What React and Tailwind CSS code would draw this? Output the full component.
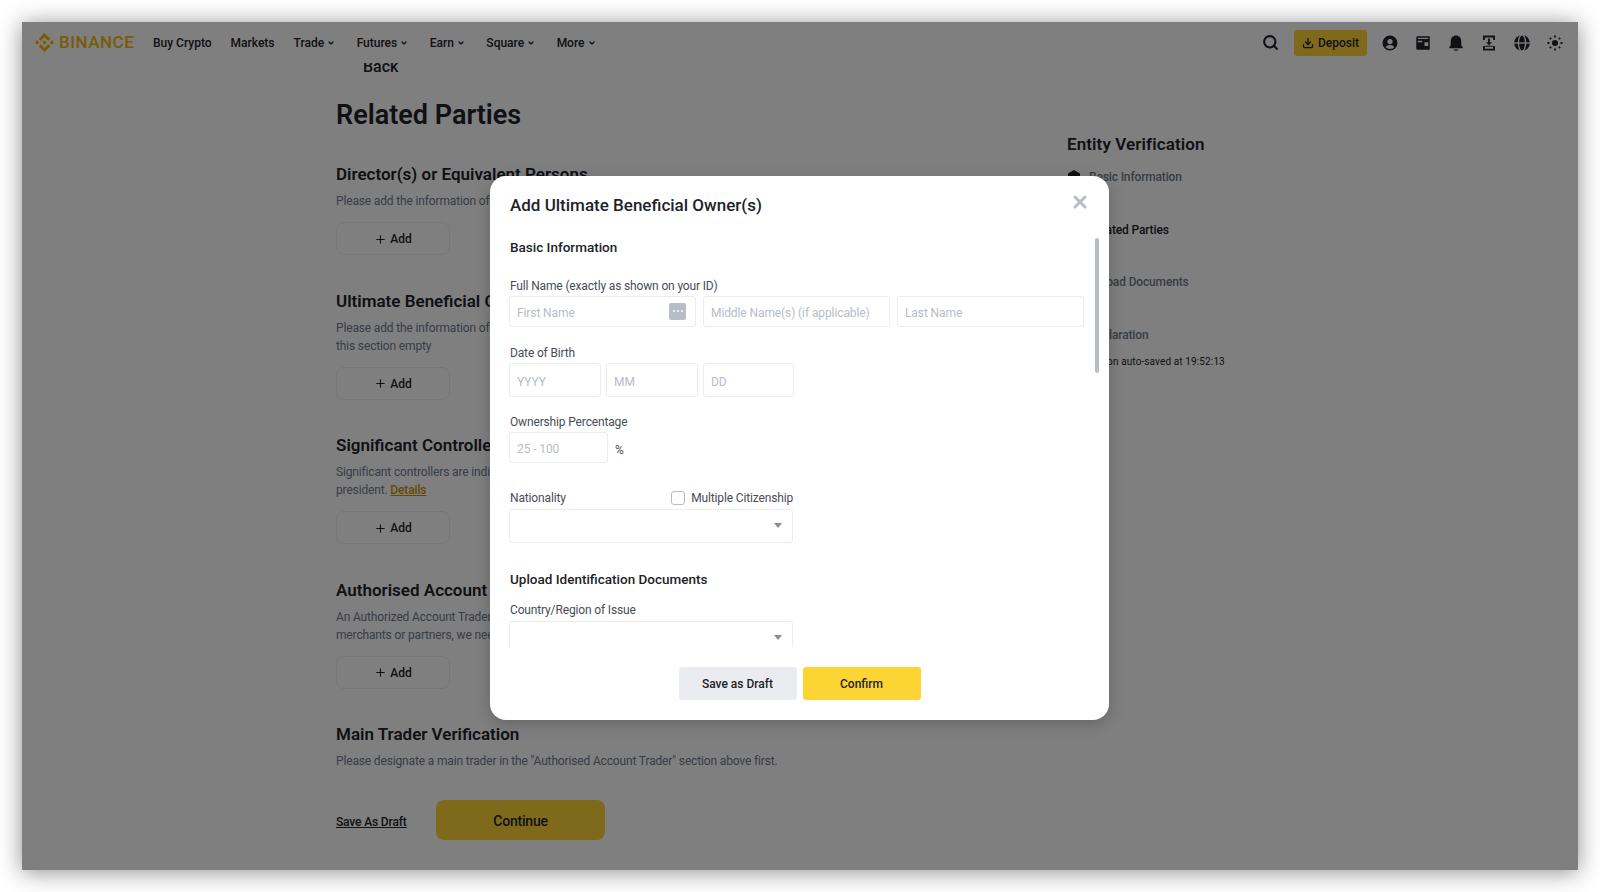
import { ChevronDown, Plus, X, Search, Download } from 'lucide-react';

const navItems = [
    { label: 'Buy Crypto' },
    { label: 'Markets' },
    { label: 'Trade', arrow: true },
    { label: 'Futures', arrow: true },
    { label: 'Earn', arrow: true },
    { label: 'Square', arrow: true },
    { label: 'More', arrow: true },
];

const BinanceMark = ({ className }) => (
    <svg viewBox="0 0 126.61 126.61" className={className} fill="#F0B90B">
        <path d="M38.73 53.2l24.59-24.58 24.6 24.6 14.3-14.31L63.32 0 24.43 38.9l14.3 14.3z" />
        <path d="M0 63.31l14.3-14.3 14.31 14.3-14.31 14.3z" />
        <path d="M38.73 73.41l24.59 24.59 24.6-24.6 14.31 14.29-38.9 38.91-38.9-38.88-.02-.02z" />
        <path d="M98 63.31l14.3-14.3 14.31 14.3-14.31 14.3z" />
        <path d="M77.83 63.3L63.32 48.78 52.59 59.51l-1.24 1.23-2.54 2.54 14.51 14.5 14.51-14.47z" />
    </svg>
);

const UserIcon = () => (
    <svg viewBox="0 0 24 24" className="w-[18px] h-[18px]" fill="#1E2329">
        <path fillRule="evenodd" d="M12 2a10 10 0 100 20 10 10 0 000-20zm0 4.5a3.5 3.5 0 110 7 3.5 3.5 0 010-7zM6.2 17.6c1-1.9 3.2-3 5.8-3s4.800 1.100 5.800 3A7.900 7.900 0 0112 20a7.900 7.900 0 01-5.800-2.400z" />
    </svg>
);

const WalletIcon = () => (
    <svg viewBox="0 0 24 24" className="w-[18px] h-[18px]" fill="#1E2329">
        <path fillRule="evenodd" d="M5 3h16v18H5a2 2 0 01-2-2V5a2 2 0 012-2zm0 3.500h14V5H5v1.500zM5 9v2h6V9H5zm9 2v5h5v-5h-5z" />
    </svg>
);

const BellIcon = () => (
    <svg viewBox="0 0 24 24" className="w-[18px] h-[18px]" fill="#1E2329">
        <path d="M12 2c-4 0-7 3.200-7 7.200V15l-2 2.500V19h18v-1.500L19 15V9.200C19 5.200 16 2 12 2z" />
        <path d="M8.500 20.500h7c-.5 1-1.900 1.800-3.500 1.800s-3-.8-3.500-1.800z" />
    </svg>
);

const ScanIcon = () => (
    <svg viewBox="0 0 24 24" className="w-[18px] h-[18px]" fill="#1E2329">
        <path d="M4 2h16v6h-2.500V4.500h-11V8H4V2zM4 16h2.500v3.500h11V16H20v6H4v-6z" />
        <path d="M10.800 6h2.400v5H16l-4 4-4-4h2.800V6zM7 15.500h10V17H7v-1.500z" />
    </svg>
);

const GlobeIcon = () => (
    <svg viewBox="0 0 24 24" className="w-[18px] h-[18px]">
        <circle cx="12" cy="12" r="10.500" fill="#1E2329" />
        <ellipse cx="12" cy="12" rx="4.800" ry="11" fill="none" stroke="#fff" strokeWidth="1.800" />
        <path d="M1 12h22" stroke="#fff" strokeWidth="1.800" />
    </svg>
);

const SunIcon = () => (
    <svg viewBox="0 0 24 24" className="w-[18px] h-[18px]" fill="#1E2329">
        <circle cx="12" cy="12" r="4" />
        <path d="M10.800 2h2.400v2.600h-2.400zM10.800 19.400h2.400V22h-2.400zM2 10.800h2.600v2.400H2zM19.400 10.800H22v2.400h-2.600zM4.200 5.900l1.700-1.700 1.800 1.800L6 7.700zM16.300 18l1.700-1.700 1.800 1.800-1.700 1.700zM4.200 18.100L6 16.300 7.700 18l-1.800 1.800zM16.300 6l1.800-1.800 1.700 1.700L18 7.700z" />
    </svg>
);

const Header = () => (
    <div className="relative z-10 flex items-center h-[41px] bg-white text-[#1E2329]">
        <div className="flex items-center ml-[13px] w-[118px] shrink-0">
            <BinanceMark className="w-[19px] h-[19px] shrink-0" />
            <span className="ml-[5px] text-[17px] font-medium tracking-[0.5px] text-[#F0B90B]">BINANCE</span>
        </div>
        <div className="flex items-center text-[12px] font-medium pt-[1px]">
            {navItems.map((item) => (
                <div key={item.label} className={`flex items-center ${item.arrow ? 'mr-[21.5px]' : 'mr-[19px]'}`}>
                    <span>{item.label}</span>
                    {item.arrow && <ChevronDown className="w-[8px] h-[8px] ml-[3px]" strokeWidth={4} />}
                </div>
            ))}
        </div>
        <div className="flex items-center ml-auto mr-[14px]">
            <Search className="w-[17px] h-[17px] mr-[15px]" strokeWidth={3} />
            <div className="flex items-center justify-center w-[73px] h-[26px] rounded-[3px] bg-[#FCD535] text-[12px] font-medium mr-[14px]">
                <Download className="w-[12px] h-[12px] mr-[4px]" strokeWidth={2.5} />
                Deposit
            </div>
            <div className="flex items-center gap-[15px]">
                <UserIcon />
                <WalletIcon />
                <BellIcon />
                <ScanIcon />
                <GlobeIcon />
                <SunIcon />
            </div>
        </div>
    </div>
);

const AddButton = () => (
    <div className="flex items-center justify-center w-[114px] h-[33px] mt-[12px] pt-[1px] rounded-lg border border-[#EAECEF] text-[12px] font-medium text-[#1E2329]">
        <Plus className="w-[13px] h-[13px] mr-[3px]" strokeWidth={2} />
        Add
    </div>
);

const Section = ({ title, children }) => (
    <div className="mb-[33.5px]">
        <h3 className="text-[17px] leading-[24px] font-semibold text-[#1E2329]">{title}</h3>
        <p className="mt-[6px] text-[12px] leading-[18px] tracking-[-0.15px] text-[#707A8A]">{children}</p>
        <AddButton />
    </div>
);

const Page = () => (
    <div className="flex pl-[314px] -mt-[6px]">
        <div className="w-[731px] shrink-0">
            <div className="pl-[27px] text-[16px] leading-[20px] font-medium text-[#1E2329]">Back</div>
            <h1 className="mt-[20px] mb-[29px] text-[27px] leading-[36px] font-semibold text-[#1E2329]">Related Parties</h1>
            <Section title="Director(s) or Equivalent Persons">
                Please add the information of all directors or equivalent persons of your entity
            </Section>
            <Section title="Ultimate Beneficial Owner(s)">
                Please add the information of all ultimate beneficial owners. If there are none, you may leave
                <br />
                this section empty
            </Section>
            <Section title="Significant Controller(s)">
                Significant controllers are individuals such as a chief executive officer, chief financial officer or
                <br />
                president. <span className="font-medium text-[#C99400] underline">Details</span>
            </Section>
            <Section title="Authorised Account Trader(s)">
                An Authorized Account Trader is a person who trades on behalf of your entity. If you work with
                <br />
                merchants or partners, we need their details as well
            </Section>
            <h3 className="text-[17px] leading-[24px] font-semibold text-[#1E2329]">Main Trader Verification</h3>
            <p className="mt-[6px] text-[12px] leading-[18px] tracking-[-0.15px] text-[#707A8A]">
                Please designate a main trader in the "Authorised Account Trader" section above first.
            </p>
            <div className="flex items-center mt-[30px]">
                <span className="w-[100px] pt-[5px] text-[12px] tracking-[-0.15px] font-medium text-[#1E2329] underline">Save As Draft</span>
                <div className="flex items-center justify-center w-[169px] h-[39.5px] pt-[3px] rounded-lg bg-[#FCD535] text-[14px] tracking-[-0.2px] font-medium text-[#1E2329]">
                    Continue
                </div>
            </div>
        </div>
        <div className="pt-[75px] w-[220px]">
            <h3 className="text-[17px] leading-[24px] tracking-[0.1px] font-semibold text-[#1E2329]">Entity Verification</h3>
            <div className="flex items-center mt-[12px] h-[18px] text-[12px] tracking-[-0.15px] font-medium text-[#707A8A]">
                <svg viewBox="0 0 14 14" className="w-[14px] h-[14px] mr-[8px]" fill="#1E2329">
                    <path d="M7 0l6 3.500v7L7 14l-6-3.500v-7z" />
                </svg>
                Basic Information
            </div>
            <div className="pl-[22px] mt-[35px] h-[18px] text-[12px] leading-[18px] tracking-[-0.15px] font-medium text-[#1E2329]">Related Parties</div>
            <div className="pl-[22px] mt-[34px] h-[18px] text-[12px] leading-[18px] tracking-[-0.15px] font-medium text-[#707A8A]">Upload Documents</div>
            <div className="pl-[22px] mt-[35px] h-[18px] text-[12px] leading-[18px] tracking-[-0.15px] font-medium text-[#707A8A]">Declaration</div>
            <div className="mt-[10px] text-[10px] leading-[16px] tracking-[0.12px] text-[#1E2329]">Application auto-saved at 19:52:13</div>
        </div>
    </div>
);

const Field = ({ placeholder, className, children }) => (
    <div className={`flex items-center shrink-0 pl-[7px] pr-[9px] rounded-[3px] border border-[#EAECEF] text-[12px] tracking-[-0.1px] text-[#B7BDC6] ${className}`}>
        <span className="pt-[4px]">{placeholder}</span>
        {children}
    </div>
);

const Caret = () => <div className="ml-auto mr-[1px] w-0 h-0 border-x-[4px] border-t-[5px] border-x-transparent border-t-[#848E9C]" />;

const Label = ({ className = '', children }) => (
    <div className={`text-[12px] leading-[18px] tracking-[-0.15px] text-[#474D57] ${className}`}>{children}</div>
);

const Modal = () => (
    <div className="relative flex flex-col w-[619px] h-[544.5px] ml-[-1px] rounded-2xl bg-white shadow-[0_4px_16px_rgba(0,0,0,0.2)]">
        <div className="flex items-start justify-between h-[49px] pt-[17px] pl-[20px] pr-[19px] shrink-0">
            <h2 className="text-[17px] leading-[24px] font-medium text-[#1E2329]">Add Ultimate Beneficial Owner(s)</h2>
            <X className="w-[20px] h-[20px] -mt-[1px] text-[#B7BDC6]" strokeWidth={3.5} />
        </div>
        <div className="h-[422px] overflow-hidden pl-[19px] shrink-0">
            <div className="mt-[12px] ml-px text-[13.5px] leading-[20px] font-medium text-[#1E2329]">Basic Information</div>
            <Label className="mt-[20px] ml-px">Full Name (exactly as shown on your ID)</Label>
            <div className="flex gap-[7px] mt-[1px]">
                <Field placeholder="First Name" className="w-[187px] h-[31px]">
                    <div className="flex items-center justify-center gap-[2px] ml-auto mr-0 w-[17px] h-[17px] rounded-[2px] bg-[#B7BDC6]">
                        <span className="w-[2px] h-[2px] bg-white rounded-full" />
                        <span className="w-[2px] h-[2px] bg-white rounded-full" />
                        <span className="w-[2px] h-[2px] bg-white rounded-full" />
                    </div>
                </Field>
                <Field placeholder="Middle Name(s) (if applicable)" className="w-[187px] h-[31px]" />
                <Field placeholder="Last Name" className="w-[187px] h-[31px]" />
            </div>
            <Label className="mt-[17px] ml-px">Date of Birth</Label>
            <div className="flex gap-[5px] mt-[1px]">
                <Field placeholder="YYYY" className="w-[92px] h-[34px]" />
                <Field placeholder="MM" className="w-[92px] h-[34px]" />
                <Field placeholder="DD" className="w-[91px] h-[34px]" />
            </div>
            <Label className="mt-[16px] ml-px">Ownership Percentage</Label>
            <div className="flex items-center mt-[1px]">
                <Field placeholder="25 - 100" className="w-[99px] h-[31px]" />
                <span className="ml-[7px] pt-[5px] text-[12px] text-[#474D57]">%</span>
            </div>
            <div className="flex items-center justify-between w-[284px] mt-[26px]">
                <Label className="ml-px">Nationality</Label>
                <div className="flex items-center">
                    <div className="w-[14px] h-[14px] mr-[6px] rounded-[3px] border border-[#B7BDC6]" />
                    <Label>Multiple Citizenship</Label>
                </div>
            </div>
            <Field className="w-[284px] h-[34px] mt-[2px]">
                <Caret />
            </Field>
            <div className="mt-[26px] ml-px text-[13.5px] leading-[20px] font-medium text-[#1E2329]">Upload Identification Documents</div>
            <Label className="mt-[12px] ml-px">Country/Region of Issue</Label>
            <Field className="w-[284px] h-[34px] mt-[2px]">
                <Caret />
            </Field>
        </div>
        <div className="flex justify-center gap-[6px] pt-[20px] shrink-0">
            <div className="flex items-center justify-center w-[118px] h-[33px] pt-[2px] rounded-[3px] bg-[#EAECEF] text-[12px] font-medium text-[#1E2329]">
                Save as Draft
            </div>
            <div className="flex items-center justify-center w-[118px] h-[33px] pt-[2px] rounded-[3px] bg-[#FCD535] text-[12px] font-medium text-[#1E2329]">
                Confirm
            </div>
        </div>
        {/* scrollbar thumb */}
        <div className="absolute left-[605px] top-[62px] w-[4px] h-[135px] rounded-full bg-[#B7BDC6]" />
    </div>
);

export default function App() {
    return (
        <div className="h-[892px] overflow-hidden bg-white p-[22px] font-['Roboto',sans-serif]">
            <div className="relative h-[848px] overflow-hidden bg-white shadow-[0_2px_22px_rgba(0,0,0,0.45)]">
                <Header />
                <Page />
                <div className="absolute inset-0 z-20 flex justify-center pt-[153.5px] bg-black/50">
                    <Modal />
                </div>
            </div>
        </div>
    );
}
